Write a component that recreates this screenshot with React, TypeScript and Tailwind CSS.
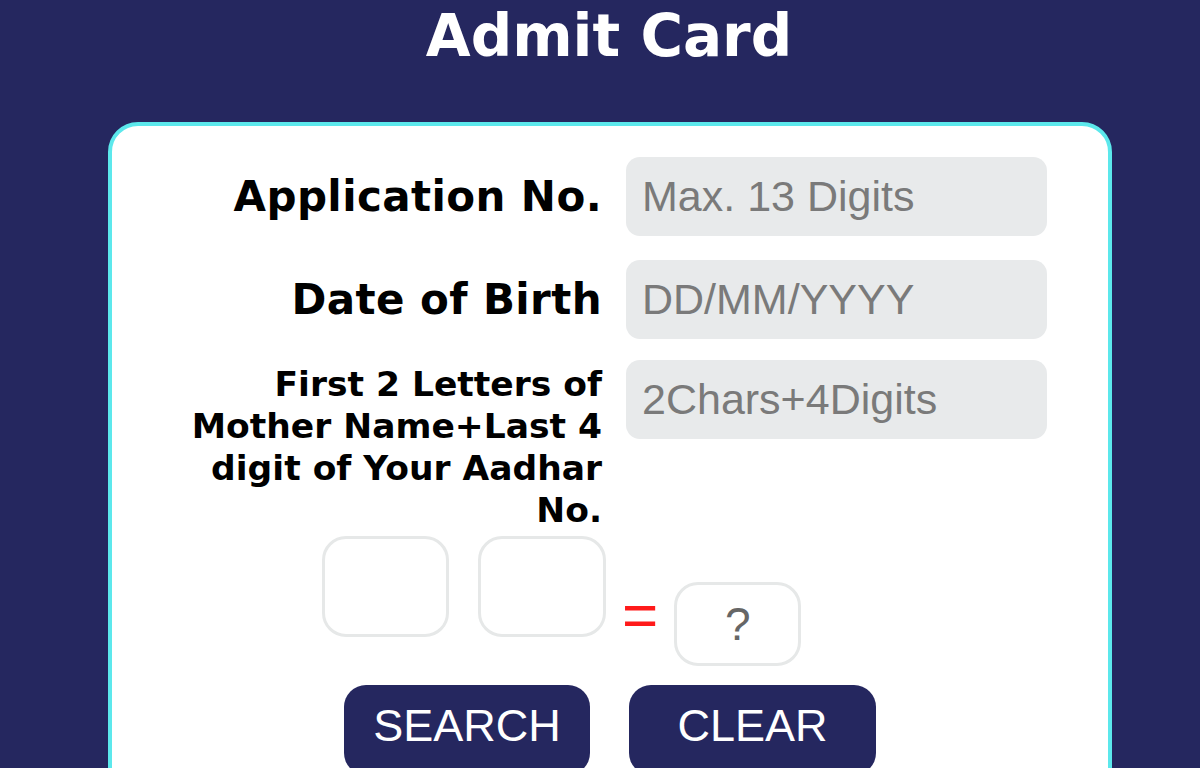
export default function App() {
  return (
    <div className="w-[1200px] h-[768px] overflow-hidden bg-[#25275f] font-['DejaVu_Sans',sans-serif]">
      <h1 className="pt-[5px] pl-[18px] text-center text-[58px] leading-[62px] font-bold text-white">Admit Card</h1>

      <div className="ml-[108px] mt-[55px] w-[1004px] h-[700px] rounded-[30px] border-4 border-[#5ce8ec] bg-white pt-[31px]">
        <div className="grid grid-cols-[490px_421px] gap-x-6 gap-y-[24px]">
          <label className="self-center text-right text-[42px] tracking-[0.4px] font-bold text-black">Application No.</label>
          <input
            placeholder="Max. 13 Digits"
            className="h-[79px] rounded-[14px] bg-[#e8eaeb] px-4 text-[43px] font-['Liberation_Sans',sans-serif] text-[#333] placeholder:text-[#7a7a7a] outline-none"
          />

          <label className="self-center text-right text-[42px] tracking-[0.4px] font-bold text-black">Date of Birth</label>
          <input
            placeholder="DD/MM/YYYY"
            className="h-[79px] rounded-[14px] bg-[#e8eaeb] px-4 text-[43px] font-['Liberation_Sans',sans-serif] text-[#333] placeholder:text-[#7a7a7a] outline-none"
          />

          <label className="pl-[60px] text-right text-[34.5px] leading-[42px] font-bold text-black">
            First 2 Letters of Mother Name+Last 4 digit of Your Aadhar No.
          </label>
          <input
            placeholder="2Chars+4Digits"
            className="h-[79px] -mt-[3px] rounded-[14px] bg-[#e8eaeb] px-4 text-[43px] font-['Liberation_Sans',sans-serif] text-[#333] placeholder:text-[#7a7a7a] outline-none"
          />
        </div>

        {/* Captcha */}
        <div className="mt-[5px] ml-[210px] flex items-start">
          <div className="w-[127px] h-[101px] rounded-[24px] border-[3px] border-[#e6e8e8]" />
          <div className="ml-[29px] w-[128px] h-[101px] rounded-[24px] border-[3px] border-[#e6e8e8]" />
          <span className="ml-[16px] mt-[54px] text-[62px] leading-[50px] text-[#ff1a1a] font-['Liberation_Sans',sans-serif]">=</span>
          <div className="ml-[16px] mt-[46px] w-[127px] h-[84px] rounded-[24px] border-[3px] border-[#e6e8e8] flex items-center justify-center text-[46px] text-[#666] font-['Liberation_Sans',sans-serif]">
            ?
          </div>
        </div>

        {/* Buttons */}
        <div className="mt-[19px] ml-[232px] flex gap-[39px]">
          <button className="w-[246px] h-[90px] pb-[8px] rounded-[22px] bg-[#25275f] text-white text-[45px] font-['Liberation_Sans',sans-serif]">
            SEARCH
          </button>
          <button className="w-[247px] h-[90px] pb-[8px] rounded-[22px] bg-[#25275f] text-white text-[45px] font-['Liberation_Sans',sans-serif]">
            CLEAR
          </button>
        </div>
      </div>
    </div>
  );
}
